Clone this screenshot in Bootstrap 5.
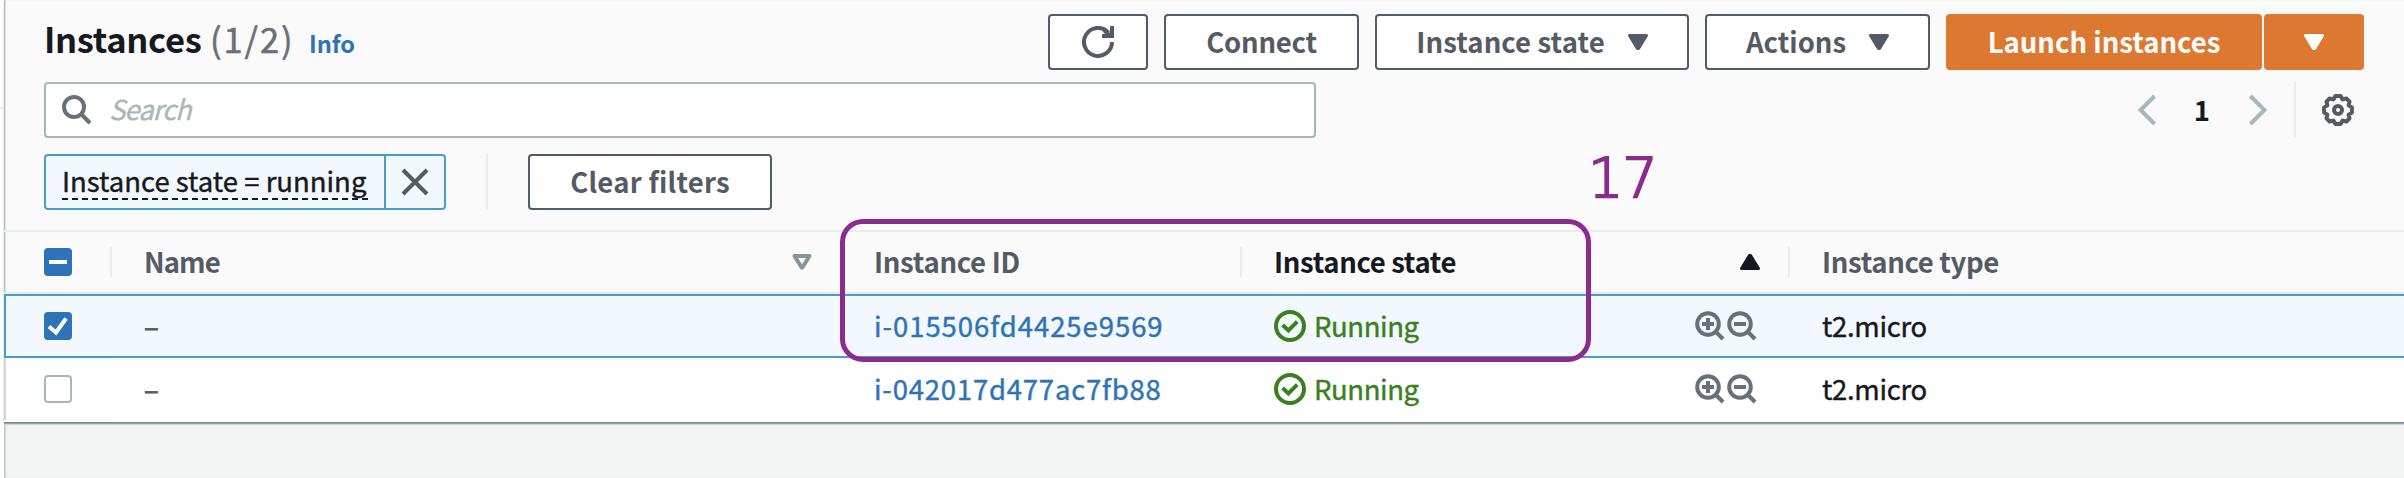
<!DOCTYPE html>
<html lang="en">
<head>
<meta charset="utf-8">
<title>Instances</title>
<link rel="stylesheet" href="https://cdn.jsdelivr.net/npm/bootstrap@5.3.0/dist/css/bootstrap.min.css">
<script src="https://cdn.jsdelivr.net/npm/bootstrap@5.3.0/dist/js/bootstrap.bundle.min.js"></script>
<style>
  :root { --ink:#16191f; --grey:#545b64; --mute:#687078; --line:#eaeded; --link:#2e73b8; --sky:#44a0c8; }
  body { font-family:"Noto Sans CJK SC","Open Sans",sans-serif; font-size:27.5px; line-height:36px; color:var(--ink); background:#f2f3f3; width:2404px; height:478px; overflow:hidden; }
  svg { display:block; flex:none; }
  .rail { width:4px; background:#fff; flex:none; }
  .rail i { display:block; height:2px; margin-top:107px; background:var(--line); }
  .main-pane { flex:1; min-width:0; border-left:1px solid #bfc6ca; box-shadow:inset 1px 0 1px #d5dadb; }
  .panel { height:422px; margin-left:-1px; background:#fafafa; border-left:1px solid #b9c0c4; box-shadow:inset 1px 0 1px #dadedf, 0 1px 0 #7d898c, 0 2px 1px #98a2a5, 0 3px 1px #dde0e1; position:relative; }
  .bar { padding-left:39px; }
  .bar-top { height:82px; padding-top:14px; padding-right:40px; }
  .bar-mid { height:56px; padding-right:50px; }
  .bar-low { height:92px; padding-top:16px; }
  h1 { font-size:34.5px; font-weight:700; line-height:40px; letter-spacing:-.32px; padding-top:4px; }
  h1 .tally { font-weight:400; color:var(--mute); letter-spacing:1.9px; margin-left:1px; -webkit-text-stroke:.5px; }
  h1 .info { font-size:23.6px; color:var(--link); letter-spacing:-.1px; text-decoration:none; margin-left:7px; }
  .abtn { --bs-btn-border-radius:4px; --bs-btn-color:var(--grey); --bs-btn-border-color:var(--grey); --bs-btn-bg:#fff; --bs-btn-font-weight:700; --bs-btn-line-height:36px; --bs-btn-font-size:27.5px; border-width:2px; height:56px; padding:0; display:flex; align-items:center; justify-content:center; }
  .abtn span, .lift { padding-bottom:3px; }
  .abtn-go { --bs-btn-color:#fff; --bs-btn-bg:#dd7830; --bs-btn-border-color:#dd7830; }
  .find { width:1272px; height:56px; border:2px solid #a9b6b7; border-radius:4px; background:#fff; padding-left:16px; }
  .find input { font-size:27.3px; line-height:36px; font-style:italic; letter-spacing:-.9px; box-shadow:none!important; margin:0 0 4px 17px; -webkit-text-stroke:.4px; }
  .find input::placeholder { color:#aab7b8; opacity:1; }
  .token { height:56px; border:2px solid var(--sky); border-radius:4px; background:#f2f8fd; width:402px; }
  .token .what { width:340px; border-right:2px solid var(--sky); padding-left:16px; box-sizing:border-box; }
  .token .dash-line { display:block; width:306px; height:32px; line-height:32px; margin-top:8px; white-space:nowrap; letter-spacing:0; -webkit-text-stroke:.4px; }
  .dashes { display:block; height:2px; width:306px; background:repeating-linear-gradient(90deg,var(--ink) 0 6px,transparent 6px 10px); margin-top:2px; }
  .rule { width:2px; height:56px; background:var(--line); }
  .grid-table { table-layout:fixed; border-collapse:separate; border-spacing:0; width:2400px; margin:0 0 0 -1px; position:relative; --bs-table-bg:transparent; color:var(--ink); }
  .grid-table th, .grid-table td { height:64px; padding:0 0 0 32px; border:0; border-bottom:2px solid transparent; vertical-align:middle; color:var(--ink); white-space:nowrap; }
  .grid-table > thead > tr > th { border-top:2px solid var(--line); border-bottom:2px solid var(--line); height:64px; color:var(--grey); font-weight:700; }
  .grid-table > tbody > tr > td { -webkit-text-stroke:.4px; }
  .cellbox { display:flex; align-items:center; height:30px; }
  .split { width:2px; height:30px; background:var(--line); margin-left:auto; }
  .grid-table > tbody > tr.picked > td { background:#f2f8fd; border-top:2px solid var(--sky); border-bottom:2px solid var(--sky); height:64px; }
  .grid-table > tbody > tr.picked > td:first-child { border-left:2px solid var(--sky); padding-left:38px; }
  .grid-table > tbody > tr:last-child > td { background:#fff; }
  .grid-table > tbody > tr:last-child > td:first-child { box-shadow:inset 2px 0 1px #cfd4d6; }
  .grid-table th:first-child, .grid-table td:first-child { padding-left:40px; }
  .tick { width:28px; height:28px; margin:0; border:2px solid #aab7b8; border-radius:4px!important; display:block; }
  .tick:checked { background-color:var(--link); border-color:var(--link); background-image:none!important; }
  .tickwrap { display:grid; width:28px; }
  .tickwrap > * { grid-area:1/1; }
  .tickwrap svg { pointer-events:none; z-index:1; }
  .iid { color:var(--link); text-decoration:none; letter-spacing:.94px; }
  .iid-b { letter-spacing:.78px; }
  .run { color:#3a7f20; letter-spacing:-.42px; }
  .t2 { letter-spacing:-.3px; }
  .dash-mark { color:var(--grey); -webkit-text-stroke:.8px; }
  .lens { color:var(--mute); }
  .mark-box { position:absolute; left:835px; top:219px; width:751px; height:143px; border:5px solid #8b2a8f; border-radius:23px; }
  .mark-no { position:absolute; left:1583px; top:146px; font:200 56px/64px "DejaVu Sans",sans-serif; font-weight:200; letter-spacing:-1.5px; color:#8b2a8f; -webkit-text-stroke:2px #8b2a8f; }
</style>
</head>
<body>
<svg width="0" height="0" class="position-absolute">
  <defs>
    <symbol id="down" viewBox="0 0 20 16"><path d="M1.5 1.5h17L10.6 14.5h-1.2z" fill="currentColor" stroke="currentColor" stroke-width="3" stroke-linejoin="round"/></symbol>
    <symbol id="lens" viewBox="0 0 32 32"><g fill="none" stroke="currentColor" stroke-width="4"><circle cx="14" cy="14" r="10.8"/><path d="M21.500 21.500l7.500 7.500"/></g></symbol>
    <symbol id="ok" viewBox="0 0 32 32"><g fill="none" stroke="currentColor" stroke-width="4"><circle cx="16" cy="16" r="14"/><path d="M8.600 15l5.800 5.400 8.800-8.800"/></g></symbol>
  </defs>
</svg>
<div class="d-flex vh-100">
  <aside class="rail"><i></i></aside>
  <main class="main-pane">
    <section class="panel">
      <header class="bar bar-top d-flex align-items-start justify-content-between">
        <h1 class="m-0 text-nowrap">Instances <span class="tally">(1/2)</span> <a href="#" class="info">Info</a></h1>
        <div class="d-flex gap-3">
          <button class="btn abtn" style="width:100px" aria-label="Refresh"><svg width="32" height="32" viewBox="0 0 32 32" fill="none" stroke="currentColor" stroke-width="4"><path d="M30 16A14 14 0 1 1 26.5 6.7"/><path d="M30 0v10H20"/><path d="M22 4l6 6z"/></svg></button>
          <button class="btn abtn" style="width:195px"><span style="letter-spacing:-.25px">Connect</span></button>
          <button class="btn abtn" style="width:314px"><span style="letter-spacing:.1px">Instance state</span><svg style="margin-left:23px" width="20" height="16"><use href="#down"/></svg></button>
          <button class="btn abtn" style="width:225px"><span>Actions</span><svg style="margin-left:23px" width="20" height="16"><use href="#down"/></svg></button>
          <div class="d-flex" style="gap:2px">
            <button class="btn abtn abtn-go" style="width:316px"><span>Launch instances</span></button>
            <button class="btn abtn abtn-go" style="width:100px" aria-label="More"><svg width="20" height="16"><use href="#down"/></svg></button>
          </div>
        </div>
      </header>
      <div class="bar bar-mid d-flex align-items-center justify-content-between">
        <div class="find d-flex align-items-center">
          <svg width="30" height="30" viewBox="0 0 30 30" fill="none" stroke="#687078" stroke-width="4"><circle cx="12" cy="12" r="10"/><path d="M19 19l9 9"/></svg>
          <input class="form-control border-0 bg-transparent p-0" placeholder="Search">
        </div>
        <nav class="d-flex align-items-center">
          <svg width="18" height="32" viewBox="0 0 18 32" fill="none" stroke="#aab7b8" stroke-width="4"><path d="M16.600 2L2.600 16l14 14"/></svg>
          <b class="lift" style="margin:0 39px 0 38px">1</b>
          <svg width="18" height="32" viewBox="0 0 18 32" fill="none" stroke="#aab7b8" stroke-width="4"><path d="M1.400 2l14 14-14 14"/></svg>
          <span class="rule" style="margin:0 26px 0 27px"></span>
          <svg width="32" height="32" viewBox="-16 -16 32 32" fill="none" stroke="#545b64" stroke-width="4"><path stroke-linejoin="round" d="M13.9-2.6V2.6L10.6 4.6 11.5 8.4 8.4 11.5 4.6 10.6 2.6 13.9H-2.6L-4.6 10.6-8.4 11.5-11.5 8.4-10.6 4.6-13.9 2.6V-2.6L-10.6-4.6-11.5-8.4-8.4-11.5-4.6-10.6-2.6-13.9H2.6L4.6-10.6 8.4-11.5 11.5-8.4 10.6-4.6z"/><circle r="4"/></svg>
        </nav>
      </div>
      <div class="bar bar-low d-flex align-items-start">
        <div class="token d-flex">
          <div class="what"><span class="dash-line">Instance state = running</span><span class="dashes"></span></div>
          <div class="flex-fill d-flex align-items-center justify-content-center"><svg width="28" height="28" viewBox="0 0 28 28" fill="none" stroke="#545b64" stroke-width="4"><path d="M2 2l24 24M26 2L2 26"/></svg></div>
        </div>
        <span class="rule" style="margin:0 40px"></span>
        <button class="btn abtn" style="width:244px"><span style="letter-spacing:.25px">Clear filters</span></button>
      </div>
      <table class="table grid-table">
        <colgroup><col style="width:108px"><col style="width:730px"><col style="width:400px"><col style="width:548px"><col></colgroup>
        <thead>
          <tr>
            <th><div class="cellbox"><span class="tickwrap"><input type="checkbox" class="form-check-input tick" checked><svg width="28" height="28"><path d="M5 14h18" stroke="#fff" stroke-width="4"/></svg></span><i class="split"></i></div></th>
            <th><div class="cellbox"><span class="lift" style="letter-spacing:-.9px">Name</span><svg class="ms-auto" style="margin-right:30px" width="20" height="16"><path d="M2.500 2h15L10.400 13.500h-.8z" fill="none" stroke="#879596" stroke-width="4" stroke-linejoin="round"/></svg></div></th>
            <th><div class="cellbox"><span class="lift" style="letter-spacing:-.3px">Instance ID</span><i class="split"></i></div></th>
            <th><div class="cellbox"><span class="lift" style="letter-spacing:-.35px;color:#16191f">Instance state</span><svg class="ms-auto" style="margin-right:28px;color:#16191f;transform:scaleY(-1)" width="20" height="16"><use href="#down"/></svg><i class="split ms-0"></i></div></th>
            <th><div class="cellbox"><span class="lift" style="letter-spacing:-.35px">Instance type</span></div></th>
          </tr>
        </thead>
        <tbody>
          <tr class="picked">
            <td><span class="tickwrap"><input type="checkbox" class="form-check-input tick" checked><svg width="28" height="28"><path d="M5 14.500l7 6L22 6.500" fill="none" stroke="#fff" stroke-width="4"/></svg></span></td>
            <td><div class="cellbox"><span class="lift dash-mark">–</span></div></td>
            <td><div class="cellbox"><a href="#" class="iid lift">i-015506fd4425e9569</a></div></td>
            <td><div class="cellbox run"><svg width="32" height="32"><use href="#ok"/></svg><span class="lift" style="margin-left:8px">Running</span>
              <svg class="ms-auto lens" width="32" height="32"><use href="#lens"/><path d="M8 14h12M14 8v12" stroke="currentColor" stroke-width="4"/></svg><svg class="lens" style="margin-right:32px" width="32" height="32"><use href="#lens"/><path d="M8 14h12" stroke="currentColor" stroke-width="4"/></svg></div></td>
            <td><div class="cellbox"><span class="lift t2">t2.micro</span></div></td>
          </tr>
          <tr>
            <td><input type="checkbox" class="form-check-input tick"></td>
            <td><div class="cellbox"><span class="lift dash-mark">–</span></div></td>
            <td><div class="cellbox"><a href="#" class="iid iid-b lift">i-042017d477ac7fb88</a></div></td>
            <td><div class="cellbox run"><svg width="32" height="32"><use href="#ok"/></svg><span class="lift" style="margin-left:8px">Running</span>
              <svg class="ms-auto lens" width="32" height="32"><use href="#lens"/><path d="M8 14h12M14 8v12" stroke="currentColor" stroke-width="4"/></svg><svg class="lens" style="margin-right:32px" width="32" height="32"><use href="#lens"/><path d="M8 14h12" stroke="currentColor" stroke-width="4"/></svg></div></td>
            <td><div class="cellbox"><span class="lift t2">t2.micro</span></div></td>
          </tr>
        </tbody>
      </table>
      <div class="mark-box"></div>
      <div class="mark-no">17</div>
    </section>
  </main>
</div>
</body>
</html>
